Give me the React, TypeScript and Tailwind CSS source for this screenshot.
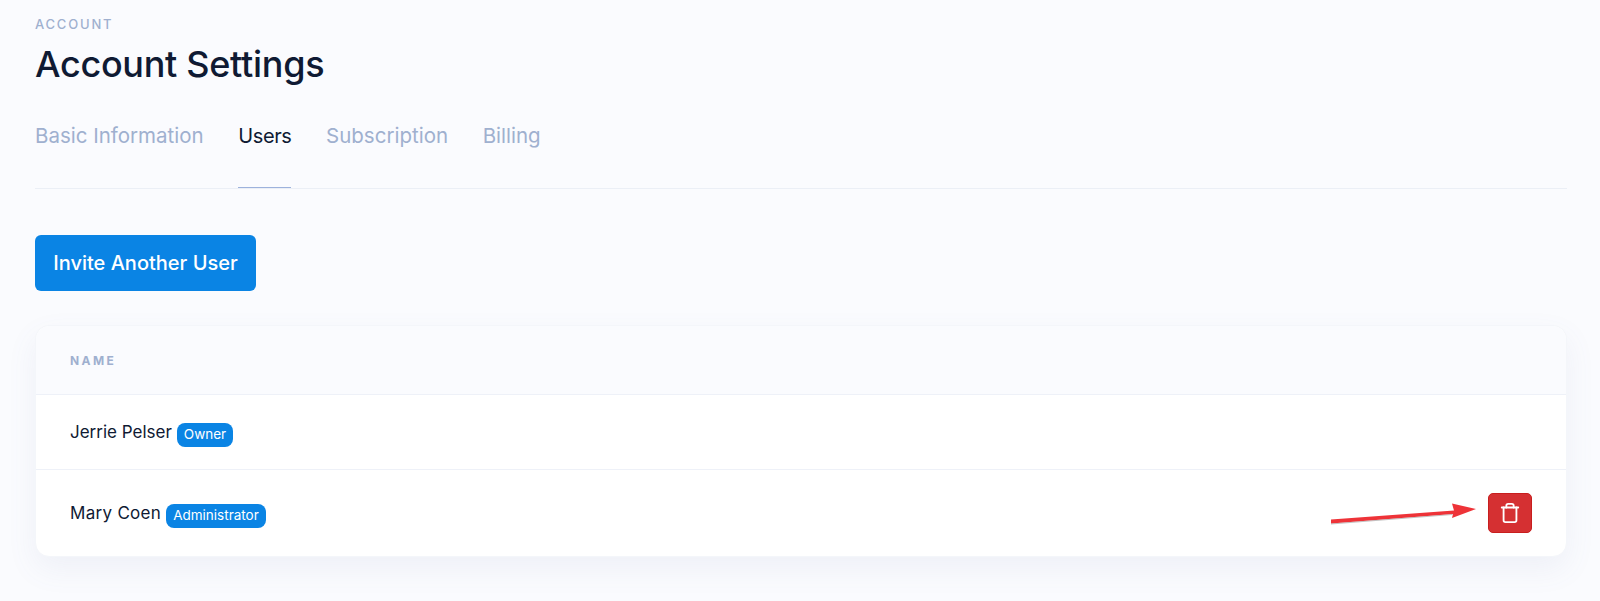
import { Trash } from 'lucide-react';

const TABS = ['Basic Information', 'Users', 'Subscription', 'Billing'];

function Badge({ label }: { label: string }) {
  return (
    <span className="mt-[3px] ml-[5px] inline-flex h-[24px] items-center rounded-[8px] bg-[#0a84e4] px-[7px] text-[13.5px] tracking-normal text-white">
      {label}
    </span>
  );
}

export default function App() {
  return (
    <div className="h-[601px] overflow-hidden bg-[#fafbfe] pl-[35px] pr-[33px] pt-[15px] font-['Inter',sans-serif]">
      <p className="text-[13px] leading-[18px] font-medium uppercase tracking-[1.8px] text-[#9fb0cf]">Account</p>
      <h1 className="mt-[8px] text-[36px] leading-[46px] font-medium tracking-[-0.3px] text-[#0f1a33]">Account Settings</h1>

      {/* Tabs */}
      <div className="mt-[25px] flex gap-[34.6px] border-b border-[#ebeff6]">
        {TABS.map((tab) => (
          <div
            key={tab}
            className={
              tab === 'Users'
                ? 'h-[76px] border-b border-[#9db2dc] pt-[10px] -mb-px text-[20px] leading-[28px] tracking-[-0.4px] text-[#0f1a33]'
                : 'h-[76px] pt-[10px] text-[20.5px] leading-[28px] text-[#9fb0cf]'
            }
          >
            {tab}
          </div>
        ))}
      </div>

      <button className="mt-[46px] flex h-[56px] w-[221px] items-center justify-center rounded-[6px] bg-[#0a84e4] text-[20px] font-medium text-white">
        Invite Another User
      </button>

      {/* Users table */}
      <div className="mt-[34px] h-[232px] rounded-[14px] border border-[#f4f6fa] bg-white shadow-[0_12px_30px_rgba(100,120,160,0.08)]">
        <div className="flex h-[69px] items-center rounded-t-[14px] border-b border-[#eef1f8] bg-[#fafbfe] pl-[34px] pt-[2px] text-[12px] font-bold uppercase tracking-[2.4px] text-[#9fb0cf]">
          Name
        </div>
        <div className="flex h-[75px] items-center border-b border-[#eef1f8] pl-[34px] pt-[2px] text-[17px] text-[#0f1a33]">
          Jerrie Pelser
          <Badge label="Owner" />
        </div>
        <div className="relative flex h-[85px] items-center justify-between pl-[34px] pr-[34px] text-[17px] text-[#0f1a33]">
          <div className="mt-[3px] flex items-center tracking-[0.3px]">
            Mary Coen
            <Badge label="Administrator" />
          </div>
          <button className="flex h-[40px] w-[44px] items-center justify-center rounded-[5px] border border-[#c81e1e] bg-[#d53032] text-white">
            <Trash size={22} strokeWidth={2} />
          </button>
          {/* Annotation arrow */}
          <svg className="absolute left-[1294px] top-[20px]" width="150" height="40" viewBox="0 0 150 40">
            <path d="M1 29.5 L124 20.5 L122 13.5 L146 19 L122 28 L123 24 L1 33.5 Z" fill="#ee3338" />
            <path d="M1 33.5 L123 24 L122 25 L1 34.5 Z" fill="#9a9a9a" opacity="0.6" />
          </svg>
        </div>
      </div>
    </div>
  );
}
